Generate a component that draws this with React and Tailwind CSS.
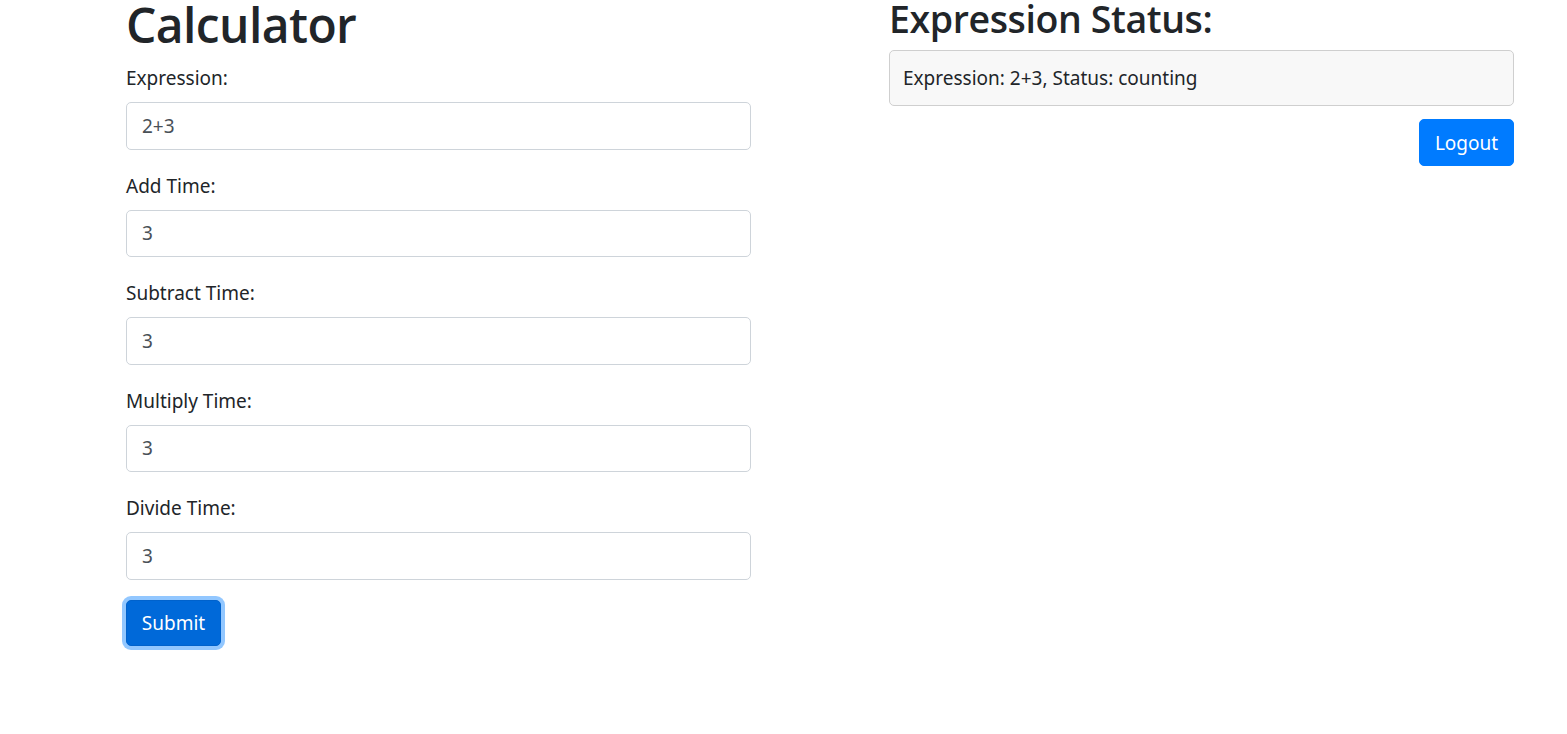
export default function App() {
  const fields = [
    ["Expression:", "2+3"],
    ["Add Time:", "3"],
    ["Subtract Time:", "3"],
    ["Multiply Time:", "3"],
    ["Divide Time:", "3"],
  ];
  return (
    <div className="min-h-[734px] overflow-hidden bg-white text-[#212529] font-['Noto_Sans',sans-serif]">
      <div className="flex pl-[126px]">
        <div className="w-[625px] shrink-0">
          <h1 className="font-['Open_Sans',sans-serif] text-[48px] leading-[49px] font-semibold tracking-[-0.6px] mb-[13px]">Calculator</h1>
          {fields.map(([label, value]) => (
            <div key={label} className="mb-[20px]">
              <label className="block text-[19px] leading-[30px] pt-[1px] mb-[9px]">{label}</label>
              <input
                type="text"
                defaultValue={value}
                className="block w-full h-[47.5px] border border-[#ced4da] rounded-[5px] px-[15px] text-[19px] text-[#495057] bg-white outline-none"
              />
            </div>
          ))}
          <button className="h-[46px] w-[95px] rounded-[5px] border border-[#0062cc] bg-[#0069d9] text-white text-[19px] leading-[30px] shadow-[0_0_0_4px_rgba(38,143,255,0.5)]">
            Submit
          </button>
        </div>
        <div className="w-[625px] shrink-0 ml-[138px]">
          <h2 className="font-['Open_Sans',sans-serif] text-[37.5px] leading-[37px] font-semibold tracking-[-0.4px] mb-[13px]">Expression Status:</h2>
          <div className="border border-[#cfcfcf] bg-[#f8f8f8] rounded-[5px] px-[13px] py-[12px] text-[19px] leading-[30px]">
            Expression: 2+3, Status: counting
          </div>
          <div className="flex justify-end mt-[13px]">
            <button className="h-[47px] w-[95px] rounded-[5px] border border-[#007bff] bg-[#007bff] text-white text-[19px] leading-[30px]">
              Logout
            </button>
          </div>
        </div>
      </div>
    </div>
  );
}
